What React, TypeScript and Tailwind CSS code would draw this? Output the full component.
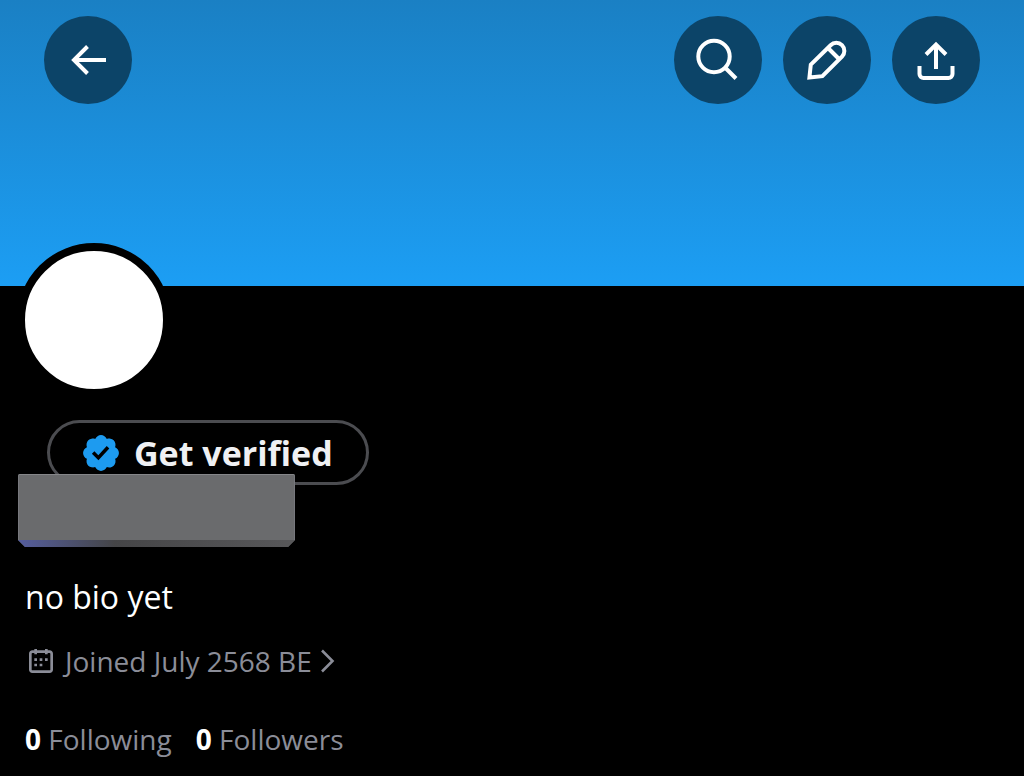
const ArrowIcon = () => (
  <svg viewBox="0 0 24 24" className="size-12 fill-white" aria-hidden="true">
    <path d="M7.414 13l5.043 5.04-1.414 1.42L3.586 12l7.457-7.46 1.414 1.42L7.414 11H21v2H7.414z" />
  </svg>
);

const SearchIcon = () => (
  <svg
    viewBox="0 0 48 48"
    className="size-12 fill-none stroke-white stroke-4"
    aria-hidden="true"
  >
    <circle cx="20" cy="20.5" r="15.7" />
    <path d="M31 31.5L42 42.5" />
  </svg>
);

const PencilIcon = () => (
  <svg
    viewBox="0 0 48 48"
    className="size-12 fill-none stroke-white stroke-4"
    aria-hidden="true"
  >
    <path d="M6.4 41.6L7.8 28.6L27.6 9.2a7.9 7.9 0 0 1 11.4 11.4L19.4 40.2Z" />
    <path d="M25 12L36 23" />
  </svg>
);

const ShareIcon = () => (
  <svg
    viewBox="0 0 48 48"
    className="size-12 fill-none stroke-white stroke-4"
    aria-hidden="true"
  >
    <path d="M24 8V33M14 18.5L24 8.5L34 18.5" />
    <path d="M7.5 30v8a4 4 0 0 0 4 4h25a4 4 0 0 0 4-4v-8" />
  </svg>
);

const VerifiedIcon = () => (
  <svg viewBox="0 0 22 22" className="size-[42px] fill-[#1d9bf0]" aria-hidden="true">
    <path d="M20.396 11c-.018-.646-.215-1.275-.57-1.816-.354-.54-.852-.972-1.438-1.246.223-.607.27-1.264.14-1.897-.131-.634-.437-1.218-.882-1.687-.47-.445-1.053-.75-1.687-.882-.633-.13-1.29-.083-1.897.14-.273-.587-.704-1.086-1.245-1.44S11.647 1.62 11 1.604c-.646.017-1.273.213-1.813.568s-.969.854-1.24 1.44c-.608-.223-1.267-.272-1.902-.14-.635.13-1.22.436-1.69.882-.445.47-.749 1.055-.878 1.688-.13.633-.08 1.29.144 1.896-.587.274-1.087.705-1.443 1.245-.356.54-.555 1.17-.574 1.817.02.647.218 1.276.574 1.817.356.54.856.972 1.443 1.245-.224.606-.274 1.263-.144 1.896.13.634.433 1.218.877 1.688.47.443 1.054.747 1.687.878.633.132 1.29.084 1.897-.136.274.586.705 1.084 1.246 1.439.54.354 1.17.551 1.816.569.647-.016 1.276-.213 1.817-.567s.972-.854 1.245-1.44c.604.239 1.266.296 1.903.164.636-.132 1.22-.447 1.68-.907.46-.46.776-1.044.908-1.681s.075-1.299-.165-1.903c.586-.274 1.084-.705 1.439-1.246.354-.54.551-1.17.569-1.816zM9.662 14.85l-3.429-3.428 1.293-1.302 2.072 2.072 4.4-4.794 1.347 1.246z" />
  </svg>
);

const CalendarIcon = () => (
  <svg viewBox="0 0 24 24" className="size-8 fill-[#8b8d98]" aria-hidden="true">
    <path d="M7 4V3h2v1h6V3h2v1h1.5C19.89 4 21 5.12 21 6.5v12c0 1.38-1.11 2.5-2.5 2.5h-13C4.12 21 3 19.88 3 18.5v-12C3 5.12 4.12 4 5.5 4H7zm0 2H5.5c-.27 0-.5.22-.5.5v12c0 .28.23.5.5.5h13c.28 0 .5-.22.5-.5v-12c0-.28-.22-.5-.5-.5H17v1h-2V6H9v1H7V6zm0 6h2v-2H7v2zm0 4h2v-2H7v2zm4-4h2v-2h-2v2zm0 4h2v-2h-2v2zm4-4h2v-2h-2v2z" />
  </svg>
);

const ChevronIcon = () => (
  <svg
    viewBox="0 0 16 26"
    className="h-[26px] w-4 fill-none stroke-[#8b8d98] stroke-[2.6]"
    aria-hidden="true"
  >
    <path d="M2 2.5L12.5 13L2 23.5" />
  </svg>
);

const RoundButton = ({ label, children }: any) => (
  <button
    type="button"
    aria-label={label}
    className="flex size-[88px] items-center justify-center rounded-full bg-[#0c4468]"
  >
    {children}
  </button>
);

const stats = [
  { label: "Following", count: 0 },
  { label: "Followers", count: 0 },
];

export default function App() {
  return (
    <main className="min-h-screen bg-black font-['Open_Sans',sans-serif] text-white">
      <header className="flex h-[286px] items-start justify-between bg-linear-to-b from-[#1a80c4] to-[#1c9ef4] px-11 pt-4">
        <RoundButton label="Back">
          <ArrowIcon />
        </RoundButton>
        <div className="flex gap-[21px]">
          <RoundButton label="Search">
            <SearchIcon />
          </RoundButton>
          <RoundButton label="Edit profile">
            <PencilIcon />
          </RoundButton>
          <RoundButton label="Share">
            <ShareIcon />
          </RoundButton>
        </div>
      </header>

      <section className="flex flex-col items-start px-[25px]">
        <div className="-mt-[43px] -ml-2 size-[154px] rounded-full border-8 border-black bg-white" />

        <button
          type="button"
          className="mt-[23px] ml-[22px] flex h-[65px] items-center gap-3 rounded-full border-3 border-[#4b4c50] pr-[33px] pl-[30px] text-[34px] leading-10 font-bold text-[#eff0f3]"
        >
          <VerifiedIcon />
          Get verified
        </button>

        {/* name plate, bevelled along the bottom edge */}
        <div className="relative -mt-[11px] -ml-[7px] flex h-[73px] w-[277px] flex-col rounded-t-xs bg-[#6a6b6d] [clip-path:polygon(0_0,100%_0,100%_66px,270px_100%,7px_100%,0_66px)]">
          <div className="flex-1 rounded-t-xs border-x border-t border-x-[#77787d] border-t-[#858689]" />
          <div className="h-[7px] bg-linear-to-r from-[#555d9e] via-[#454547] via-35% to-[#58585a]" />
        </div>

        <p className="mt-[30px] text-[32px] leading-10">no bio yet</p>

        <a
          href="#joined"
          className="mt-7 flex items-center gap-2 text-[28px] leading-8 text-[#8b8d98]"
        >
          <CalendarIcon />
          Joined July 2568 BE
          <ChevronIcon />
        </a>

        <div className="mt-[46px] flex gap-6 text-[28px] leading-8 text-[#8b8d98]">
          {stats.map((item) => (
            <a key={item.label} href={`#${item.label.toLowerCase()}`}>
              <span className="font-bold text-white">{item.count}</span>{" "}
              {item.label}
            </a>
          ))}
        </div>
      </section>
    </main>
  );
}
